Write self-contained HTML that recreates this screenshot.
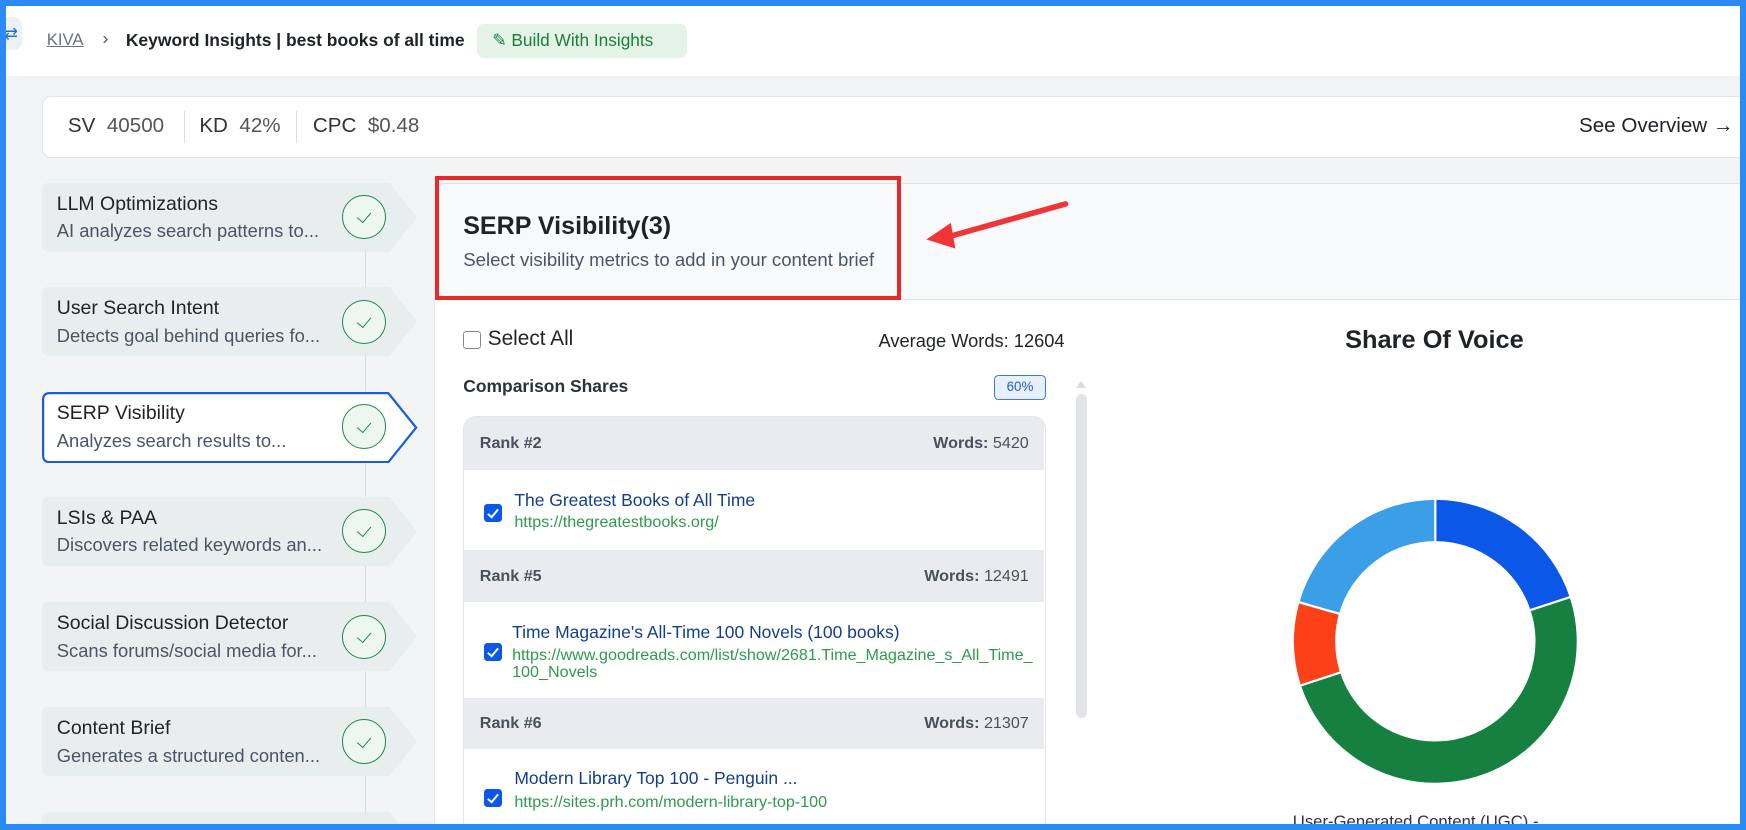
<!DOCTYPE html>
<html><head><meta charset="utf-8"><style>
*{box-sizing:border-box;margin:0;padding:0}
html,body{width:1746px;height:830px;overflow:hidden;background:#2a8af6;font-family:"Liberation Sans",Arial,sans-serif}
#w{zoom:1.11352;width:1568px;height:745px;position:relative;overflow:hidden;background:#2a8af6}
#in{position:absolute;left:5px;top:5px;width:1558px;height:735px;background:#f3f4f6;overflow:hidden}
.abs{position:absolute}
#hdr{left:0;top:0;width:1558px;height:63px;background:#fff}
.step{position:absolute;left:33px;width:337px;height:62px}
.step svg{position:absolute;left:0;top:0}
.st{position:absolute;left:13px;top:9px;font-size:17.5px;color:#1f2328;white-space:nowrap}
.sd{position:absolute;left:13px;top:34px;font-size:16.5px;color:#4a5568;white-space:nowrap}
.ck{position:absolute;left:269px;top:11px;width:40px;height:40px;border-radius:50%;border:1.3px solid #1e8a46;background:#eef6f0}
.ck:after{content:"";position:absolute;left:15px;top:12px;width:6px;height:11px;border:solid #1e8a46;border-width:0 1.6px 1.6px 0;transform:rotate(40deg)}
.rh{position:absolute;left:0;width:521px;background:#e9ebee;font-size:14.5px;font-weight:bold;color:#4a5060}
.rh .l{position:absolute;left:14px}
.rh .r{position:absolute;right:14px}
.it{position:absolute;left:0;width:521px;background:#fff}
.cb{position:absolute;left:18px;width:16px;height:16px;border-radius:3px;background:#0b57e8}
.cb:after{content:"";position:absolute;left:5px;top:2px;width:4px;height:8px;border:solid #fff;border-width:0 2px 2px 0;transform:rotate(40deg)}
.tt{position:absolute;font-size:15.7px;color:#123f8c;white-space:nowrap}
.uu{position:absolute;font-size:14.5px;color:#2e9a4e;line-height:15px;white-space:nowrap}
</style></head><body><div id="w"><div id="in">
<div id="hdr" class="abs"></div>
<div class="abs" style="left:-5px;top:10px;width:20px;height:30px;background:#eef0f3;border-radius:0 8px 8px 0;color:#1a6fe0;font-size:15px;line-height:30px;text-align:center">⇄</div>
<div class="abs" style="left:37px;top:22px;font-size:15px;color:#6b7280;text-decoration:underline">KIVA</div>
<div class="abs" style="left:87px;top:20px;font-size:16px;color:#555">›</div>
<div class="abs" style="left:108px;top:22px;font-size:15.7px;font-weight:bold;color:#1f2328">Keyword Insights | best books of all time</div>
<div class="abs" style="left:423px;top:17px;width:189px;height:30px;background:#e3f3e8;border-radius:6px;color:#1a7f37;font-size:15.5px;line-height:30px;padding-left:14px">✎ Build With Insights</div>

<div class="abs" style="left:33px;top:81px;width:1540px;height:56px;background:#fff;border:1px solid #e1e4e8;border-radius:8px"></div>
<div class="abs" style="left:56px;top:97px;font-size:18.5px;color:#333">SV&nbsp; <span style="color:#555">40500</span></div>
<div class="abs" style="left:160px;top:95px;width:1px;height:28px;background:#ddd"></div>
<div class="abs" style="left:174px;top:97px;font-size:18.5px;color:#333">KD&nbsp; <span style="color:#555">42%</span></div>
<div class="abs" style="left:261px;top:95px;width:1px;height:28px;background:#ddd"></div>
<div class="abs" style="left:276px;top:97px;font-size:18.5px;color:#333">CPC&nbsp; <span style="color:#555">$0.48</span></div>
<div class="abs" style="left:1413px;top:97px;font-size:18.5px;color:#1f2328">See Overview →</div>

<div class="abs" style="left:323px;top:190px;width:1px;height:560px;background:#d8dbe0"></div>

<div class="step" style="top:159px"><svg width="340" height="62"><path d="M0 6Q0 0 6 0H312L337 31L312 62H6Q0 62 0 56Z" fill="#e8edee"/></svg><div class="st">LLM Optimizations</div><div class="sd">AI analyzes search patterns to...</div><div class="ck"></div></div>
<div class="step" style="top:253px"><svg width="340" height="62"><path d="M0 6Q0 0 6 0H312L337 31L312 62H6Q0 62 0 56Z" fill="#e8edee"/></svg><div class="st">User Search Intent</div><div class="sd">Detects goal behind queries fo...</div><div class="ck"></div></div>
<div class="step" style="top:347px"><svg width="340" height="64"><path d="M1 7Q1 1 7 1H311L336 32L311 63H7Q1 63 1 57Z" fill="#fff" stroke="#1a5fd6" stroke-width="2"/></svg><div class="st">SERP Visibility</div><div class="sd">Analyzes search results to...</div><div class="ck"></div></div>
<div class="step" style="top:441px"><svg width="340" height="62"><path d="M0 6Q0 0 6 0H312L337 31L312 62H6Q0 62 0 56Z" fill="#e8edee"/></svg><div class="st">LSIs &amp; PAA</div><div class="sd">Discovers related keywords an...</div><div class="ck"></div></div>
<div class="step" style="top:536px"><svg width="340" height="62"><path d="M0 6Q0 0 6 0H312L337 31L312 62H6Q0 62 0 56Z" fill="#e8edee"/></svg><div class="st">Social Discussion Detector</div><div class="sd">Scans forums/social media for...</div><div class="ck"></div></div>
<div class="step" style="top:630px"><svg width="340" height="62"><path d="M0 6Q0 0 6 0H312L337 31L312 62H6Q0 62 0 56Z" fill="#e8edee"/></svg><div class="st">Content Brief</div><div class="sd">Generates a structured conten...</div><div class="ck"></div></div>
<div class="step" style="top:724px"><svg width="340" height="62"><path d="M0 6Q0 0 6 0H312L337 31L312 62H6Q0 62 0 56Z" fill="#e8edee"/></svg></div>

<div class="abs" style="left:385px;top:159px;width:1180px;height:580px;background:#fff;border-left:1px solid #e5e7eb"></div>
<div class="abs" style="left:385px;top:159px;width:1180px;height:105px;background:#f8f9fb;border-bottom:1px solid #e1e4e8;border-top:1px solid #e1e4e8"></div>
<div class="abs" style="left:386px;top:153px;width:418px;height:111px;border:4px solid #e8282b"></div>
<div class="abs" style="left:411px;top:185px;font-size:22.5px;font-weight:bold;color:#1f2328">SERP Visibility(3)</div>
<div class="abs" style="left:411px;top:219px;font-size:16.7px;color:#4a5568">Select visibility metrics to add in your content brief</div>
<svg class="abs" style="left:815px;top:170px" width="150" height="50"><path d="M137 8L30 38" stroke="#ef3535" stroke-width="5" stroke-linecap="round"/><path d="M12 40L34 25L38 48Z" fill="#ef3535"/></svg>

<div class="abs" style="left:411px;top:292px;width:16px;height:16px;border:1px solid #888;border-radius:3px;background:#fff"></div>
<div class="abs" style="left:433px;top:289px;font-size:18.7px;color:#1f2328">Select All</div>
<div class="abs" style="left:784px;top:291px;font-size:16.4px;color:#1f2328">Average Words: 12604</div>
<div class="abs" style="left:411px;top:333px;font-size:15.7px;font-weight:bold;color:#2d333a">Comparison Shares</div>
<div class="abs" style="left:888px;top:332px;width:46px;height:22px;border:1px solid #3b7be0;background:#e8f0fe;border-radius:4px;color:#1a5fd6;font-size:12px;text-align:center;line-height:20px">60%</div>
<div class="abs" style="left:961px;top:337px;width:0;height:0;border-left:5px solid transparent;border-right:5px solid transparent;border-bottom:7px solid #ddd"></div>
<div class="abs" style="left:961px;top:349px;width:10px;height:291px;background:#e3e4e7;border-radius:5px"></div>

<div class="abs" style="left:411px;top:369px;width:523px;height:380px;border:1px solid #e1e4e8;border-radius:12px;overflow:hidden;background:#fff">
<div class="rh" style="top:0;height:47px;line-height:47px"><span class="l">Rank #2</span><span class="r">Words: <span style="font-weight:normal">5420</span></span></div>
<div class="it" style="top:47px;height:72px"><div class="cb" style="top:31px"></div><div class="tt" style="left:45px;top:18px">The Greatest Books of All Time</div><div class="uu" style="left:45px;top:40px">https://thegreatestbooks.org/</div></div>
<div class="rh" style="top:119px;height:47px;line-height:47px"><span class="l">Rank #5</span><span class="r">Words: <span style="font-weight:normal">12491</span></span></div>
<div class="it" style="top:166px;height:86px"><div class="cb" style="top:37px"></div><div class="tt" style="left:43px;top:18px">Time Magazine's All-Time 100 Novels (100 books)</div><div class="uu" style="left:43px;top:40px">https://www.goodreads.com/list/show/2681.Time_Magazine_s_All_Time_<br>100_Novels</div></div>
<div class="rh" style="top:252px;height:46px;line-height:46px"><span class="l">Rank #6</span><span class="r">Words: <span style="font-weight:normal">21307</span></span></div>
<div class="it" style="top:298px;height:80px"><div class="cb" style="top:36px"></div><div class="tt" style="left:45px;top:17px">Modern Library Top 100 - Penguin ...</div><div class="uu" style="left:45px;top:40px">https://sites.prh.com/modern-library-top-100</div></div>
</div>

<div class="abs" style="left:1203px;top:288px;font-size:22.8px;font-weight:bold;color:#1f2328">Share Of Voice</div>
<svg class="abs" style="left:1149px;top:436px" width="270" height="270" viewBox="0 0 270 270">
<g transform="rotate(-90 135 135)" fill="none" stroke-width="37">
<circle cx="135" cy="135" r="108.5" stroke="#0b57e8" stroke-dasharray="136.3 1000" stroke-dashoffset="0"/>
<circle cx="135" cy="135" r="108.5" stroke="#168040" stroke-dasharray="340.9 1000" stroke-dashoffset="-136.3"/>
<circle cx="135" cy="135" r="108.5" stroke="#fc4119" stroke-dasharray="64.4 1000" stroke-dashoffset="-477.2"/>
<circle cx="135" cy="135" r="108.5" stroke="#3b9fe8" stroke-dasharray="140.1 1000" stroke-dashoffset="-541.6"/>
</g>
<g stroke="#fff" stroke-width="2"><line x1="135" y1="135" x2="135" y2="0"/><line x1="135" y1="135" x2="263" y2="93"/><line x1="135" y1="135" x2="7" y2="177"/><line x1="135" y1="135" x2="6" y2="98"/></g>
<circle cx="135" cy="135" r="89" fill="#fff"/>
</svg>
<div class="abs" style="left:1156px;top:724px;font-size:15px;color:#333">User-Generated Content (UGC) -</div>
</div></div></body></html>
